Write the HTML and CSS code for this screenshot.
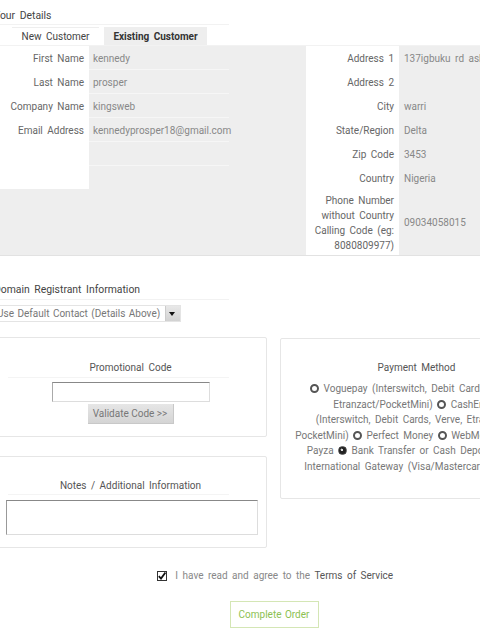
FILE: index.html
```html
<!doctype html>
<html lang="en">
<head>
<meta charset="utf-8">
<meta name="viewport" content="width=device-width, initial-scale=1">
<title>Checkout</title>
<link rel="stylesheet" href="styles.css">
</head>
<body>

	<div class="page">

		<h2 class="heading">Your Details</h2>

		<div class="tabs">
			<span class="tab">New Customer</span>
			<span class="tab active">Existing Customer</span>
		</div>

		<div class="details">

			<table class="fields fieldsLeft">
				<tr><td class="lbl">First Name</td><td class="val">kennedy</td></tr>
				<tr><td class="lbl">Last Name</td><td class="val">prosper</td></tr>
				<tr><td class="lbl">Company Name</td><td class="val">kingsweb</td></tr>
				<tr><td class="lbl">Email Address</td><td class="val">kennedyprosper18@gmail.com</td></tr>
				<tr><td class="lbl"></td><td class="val"></td></tr>
				<tr><td class="lbl"></td><td class="val blank"></td></tr>
			</table>

			<table class="fields fieldsRight">
				<tr><td class="lbl">Address 1</td><td class="val">137igbuku rd ashaka</td></tr>
				<tr><td class="lbl">Address 2</td><td class="val"></td></tr>
				<tr><td class="lbl">City</td><td class="val">warri</td></tr>
				<tr><td class="lbl">State/Region</td><td class="val">Delta</td></tr>
				<tr><td class="lbl">Zip Code</td><td class="val">3453</td></tr>
				<tr><td class="lbl">Country</td><td class="val">Nigeria</td></tr>
				<tr class="tall"><td class="lbl">Phone Number without Country Calling Code (eg: 8080809977)</td><td class="val">09034058015</td></tr>
			</table>

		</div>

		<h2 class="heading headingDomain">Domain Registrant Information</h2>

		<div class="select">
			<select>
				<option>Use Default Contact (Details Above)</option>
			</select>
			<span class="arrow"></span>
		</div>

		<div class="boxes">

			<div class="col">

				<div class="box promo">
					<div class="boxTitle">Promotional Code</div>
					<div class="rule"></div>
					<input class="code" type="text">
					<button class="validate">Validate Code &gt;&gt;</button>
				</div>

				<div class="box notes">
					<div class="boxTitle">Notes / Additional Information</div>
					<div class="rule"></div>
					<textarea></textarea>
				</div>

			</div>

			<div class="col">

				<div class="box payment">
					<div class="boxTitle">Payment Method</div>
					<p class="methods">
						<span class="radio"></span> Voguepay (Interswitch, Debit Cards, Verve,&nbsp;<br>
						Etranzact/PocketMini) <span class="radio"></span> CashEnvoy<br>
						(Interswitch, Debit Cards, Verve, Etranzact/&nbsp;<br>
						PocketMini) <span class="radio"></span> Perfect Money <span class="radio"></span> WebMoney <span class="radio"></span> 2CO<br>
						Payza <span class="radio on"></span> Bank Transfer or Cash Deposit NG <span class="radio"></span><br>
						International Gateway (Visa/Mastercard) <span class="radio"></span> Skrill
					</p>
				</div>

			</div>

		</div>

		<p class="agree">
			<span class="check"><svg width="8" height="8" viewBox="0 0 8 8"><path d="M0.8 4.2 L3 6.6 L7.4 0.6" fill="none" stroke="#111" stroke-width="1.8"/></svg></span>
			I have read and agree to the <a href="#">Terms of Service</a>
		</p>

		<div class="submit">
			<button class="order">Complete Order</button>
		</div>

	</div>

</body>
</html>
```

FILE: styles.css
```css
html, body { overflow: hidden; }
body { margin: 0; font: 10px Roboto, sans-serif; word-spacing: 2px; color: #777; background: #fff; }

.page { width: 560px; margin-left: -6px; }

.heading { font-size: 10.4px; font-weight: normal; color: #444; line-height: 15px; margin: 0; padding: 8px 0 1px; width: 235px; border-bottom: 1px solid #f2f2f2; }
.headingDomain { margin-top: 18px; padding-bottom: 2px; }

/* customer tabs */
.tabs { display: flex; gap: 5px; padding: 2px 0 0 18px; height: 18px; }
.tab { width: 87px; line-height: 17px; text-align: center; color: #444; border-top: 1px solid #eee; }
.tab.active { width: 103px; background: #eee; font-weight: bold; color: #333; }

/* details band */
.details { display: grid; grid-template-columns: 312px 1fr; align-items: start; justify-items: start; background: #eee; border-top: 1px solid #f2f2f2; border-bottom: 1px solid #e2e2e2; height: 209px; }
.fields { border-collapse: collapse; }
.fields td { height: 24px; padding: 0; line-height: 15px; }
.fields .lbl { background: #fff; text-align: right; color: #666; padding-right: 5px; }
.fields .val { padding-left: 4px; color: #888; white-space: nowrap; }
.fieldsLeft { table-layout: fixed; width: 235px; }
.fieldsLeft td { height: 22px; padding-top: 1px; }
.fieldsLeft .lbl { width: 90px; }
.fieldsLeft .val { width: 136px; border-bottom: 1px solid #f6f6f6; }
.fieldsLeft .val.blank { border-bottom: none; }
.fieldsRight { width: 100%; }
.fieldsRight .lbl { width: 88px; }
.fieldsRight .val { padding-left: 5px; }
.fieldsRight .tall td { height: 65px; }

/* contact select */
.select { display: flex; width: 187px; height: 17px; margin-top: 5px; border: 1px solid #e4e4e4; box-sizing: border-box; }
.select select { flex: 1; appearance: none; border: none; background: #fff; font: 10px Roboto, sans-serif; word-spacing: 1px; color: #777; padding: 0 0 0 2px; outline: none; }
.arrow { width: 14px; background: linear-gradient(#e8e8e8, #d2d2d2); border-left: 1px solid #ccc; position: relative; }
.arrow::after { content: ""; position: absolute; left: 3px; top: 6px; border: 3.5px solid transparent; border-top: 4px solid #111; border-bottom: none; }

/* promo, notes and payment boxes */
.boxes { display: grid; grid-template-columns: 273px 273px; gap: 13px; margin-top: 15px; align-items: start; }
.box { border: 1px solid #e6e6e6; border-radius: 2px; text-align: center; }
.boxTitle { line-height: 15px; color: #555; }
.rule { width: 221px; margin-left: 13px; border-bottom: 1px solid #f4f4f4; }

.promo { padding: 22px 0 12px; }
.promo .rule { margin-top: 2px; }
.code { display: block; box-sizing: border-box; width: 158px; height: 20px; margin: 4px auto 0; border: 1px solid #ddd; border-top-color: #888; border-left-color: #aaa; }
.validate { display: block; width: 86px; height: 20px; margin: 2px auto 0; padding: 0; border: none; border-right: 1px solid #c8c8c8; border-bottom: 1px solid #c8c8c8; background: linear-gradient(#e6e6e6, #d4d4d4); font: 10px Roboto, sans-serif; color: #777; }

.notes { margin-top: 19px; padding: 21px 0 12px; }
.notes .rule { margin-top: 1px; }
.notes textarea { display: block; box-sizing: border-box; width: 252px; height: 35px; margin: 5px 0 0 11px; border: 1px solid #ddd; border-top-color: #888; border-left-color: #999; resize: none; }

.payment { margin-top: 1px; padding: 21px 0 24px; }
.methods { margin: 6px 0 0; line-height: 15.5px; color: #777; white-space: nowrap; }
.radio { display: inline-block; width: 9px; height: 9px; box-sizing: border-box; border: 2px solid #555; border-radius: 50%; background: #fff; vertical-align: -1px; }
.radio.on { border: 1px solid #444; background: radial-gradient(circle at 40% 40%, #ddd 0 1px, #222 1.5px); }

/* terms and submit */
.agree { margin: 20px 0 0; line-height: 15px; text-align: center; color: #888; }
.agree a { color: #555; text-decoration: none; }
.check { display: inline-block; width: 10px; height: 10px; box-sizing: border-box; border: 1px solid #333; vertical-align: -1px; margin: 0 4px 0 2px; line-height: 0; }
.submit { text-align: center; margin-top: 18px; }
.order { width: 89px; height: 27px; padding: 0; background: #fff; border: 1px solid #d4e6b5; font: 10px Roboto, sans-serif; word-spacing: 1px; color: #8cc152; }
```
